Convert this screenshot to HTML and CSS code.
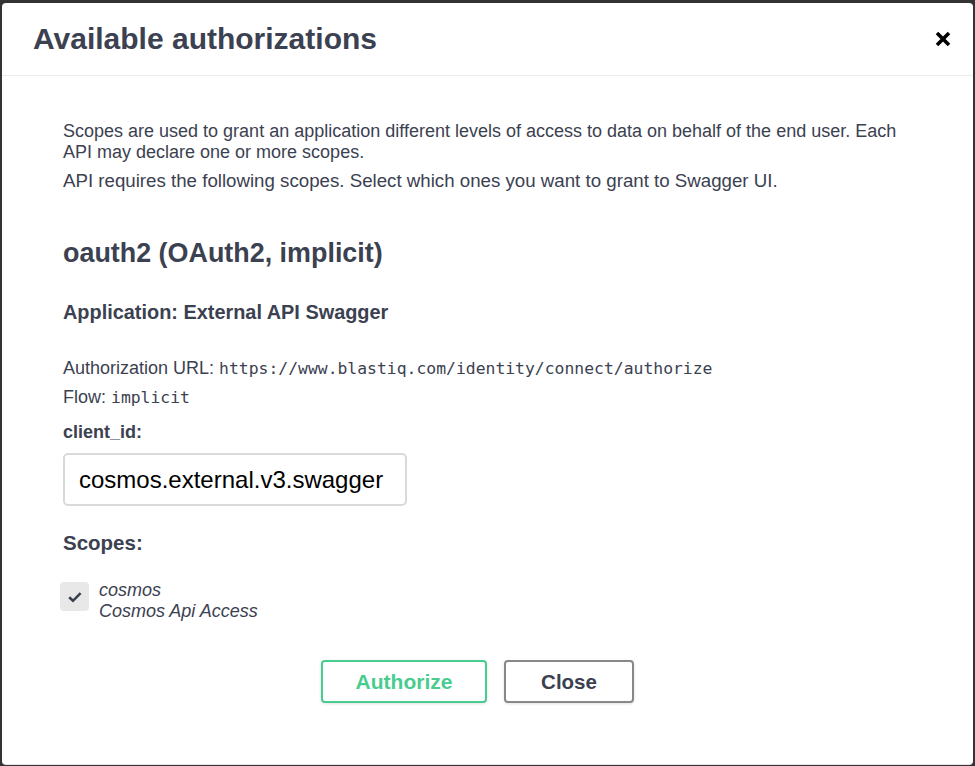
FILE: index.html
```html
<!DOCTYPE html>
<html lang="en">
<head>
<meta charset="utf-8">
<title>Available authorizations</title>
<link rel="stylesheet" href="styles.css">
</head>
<body>
<div class="modal">
  <div class="modal-header">
    <h3 class="modal-title">Available authorizations</h3>
    <button class="close-x" aria-label="Close">
      <svg width="16" height="16" viewBox="0 0 16 16"><path d="M2 2 L14 14 M14 2 L2 14" stroke="#000" stroke-width="3.6" stroke-linecap="butt"/></svg>
    </button>
  </div>
  <div class="modal-body">
    <p class="desc">Scopes are used to grant an application different levels of access to data on behalf of the end user. Each API may declare one or more scopes.</p>
    <p class="desc desc-2">API requires the following scopes. Select which ones you want to grant to Swagger UI.</p>
    <h4 class="scheme">oauth2 (OAuth2, implicit)</h4>
    <h5 class="app">Application: External API Swagger</h5>
    <p class="info first">Authorization URL: <code>https://www.blastiq.com/identity/connect/authorize</code></p>
    <p class="info">Flow: <code>implicit</code></p>
    <label class="field-label">client_id:</label>
    <div class="input-box">cosmos.external.v3.swagger</div>
    <h5 class="scopes-title">Scopes:</h5>
    <div class="scope">
      <span class="check">
        <svg width="16" height="14" viewBox="0 0 16 14"><path d="M2.2 7.2 L6 10.8 L13.6 3.2" fill="none" stroke="#3b4151" stroke-width="2.6"/></svg>
      </span>
      <div class="scope-text">
        <div>cosmos</div>
        <div>Cosmos Api Access</div>
      </div>
    </div>
    <div class="btn-row">
      <button class="btn btn-auth">Authorize</button>
      <button class="btn btn-close">Close</button>
    </div>
  </div>
</div>
</body>
</html>
```

FILE: styles.css
```css
html, body {
  margin: 0;
  padding: 0;
}
body {
  background: #333333;
  padding: 3px 2px 0 2px;
  height: 766px;
  box-sizing: border-box;
  overflow: hidden;
  font-family: "Liberation Sans", Arial, sans-serif;
  color: #3b4151;
}
.modal {
  background: #fff;
  border-radius: 4px;
  height: 761px;
  box-shadow: 0 1px 0 #e6e6e6;
}
.modal-header {
  height: 72px;
  border-bottom: 1px solid #ebebeb;
  display: flex;
  align-items: center;
  justify-content: space-between;
  padding: 0 22px 0 31px;
}
.modal-title {
  margin: 0;
  font-size: 30px;
  font-weight: bold;
  color: #3b4151;
  line-height: 36px;
}
.close-x {
  border: 0;
  background: none;
  padding: 0;
  width: 16px;
  height: 16px;
  display: flex;
  margin-top: 0;
}
.modal-body {
  padding: 45px 61px 0 61px;
}
.desc {
  margin: 0 0 7px 0;
  font-size: 18px;
  line-height: 21px;
}
.desc-2 {
  font-size: 18.7px;
}
.scheme {
  margin: 46px 0 0 0;
  font-size: 26.9px;
  line-height: 32px;
  font-weight: bold;
}
.app {
  margin: 31px 0 0 0;
  font-size: 19.9px;
  line-height: 24px;
  font-weight: bold;
}
.info {
  margin: 8px 0 0 0;
  font-size: 18px;
  line-height: 21px;
}
.info.first {
  margin-top: 34px;
}
code {
  font-family: "DejaVu Sans Mono", monospace;
  font-size: 16.4px;
  color: #3b4151;
}
.field-label {
  display: block;
  margin-top: 14px;
  font-size: 18px;
  line-height: 21px;
  font-weight: bold;
}
.input-box {
  margin-top: 10px;
  width: 344px;
  height: 53px;
  box-sizing: border-box;
  border: 2px solid #d9d9d9;
  border-radius: 5px;
  padding: 0 0 0 14px;
  display: flex;
  align-items: center;
  font-size: 24px;
  color: #000;
}
.scopes-title {
  margin: 25px 0 0 0;
  font-size: 20.5px;
  line-height: 24px;
  font-weight: bold;
}
.scope {
  margin-top: 25px;
  display: flex;
  align-items: flex-start;
  gap: 10px;
}
.check {
  width: 29px;
  height: 29px;
  margin-left: -3px;
  margin-top: 2px;
  background: #e8e8e8;
  border-radius: 4px;
  display: flex;
  align-items: center;
  justify-content: center;
  flex: none;
}
.scope-text {
  font-style: italic;
  font-size: 18px;
  line-height: 21px;
}
.btn-row {
  margin-top: 38px;
  display: flex;
  justify-content: center;
  gap: 17px;
  padding-right: 20px;
}
.btn {
  height: 43px;
  box-sizing: border-box;
  background: #fff;
  border-radius: 4px;
  font-family: "Liberation Sans", Arial, sans-serif;
  font-weight: bold;
  font-size: 20.5px;
  padding: 0;
  box-shadow: 0 1px 3px rgba(0,0,0,0.12);
}
.btn-auth {
  width: 166px;
  border: 2px solid #49cc90;
  color: #49cc90;
  font-size: 21px;
}
.btn-close {
  width: 130px;
  border: 2px solid #888888;
  color: #3b4151;
}
```
